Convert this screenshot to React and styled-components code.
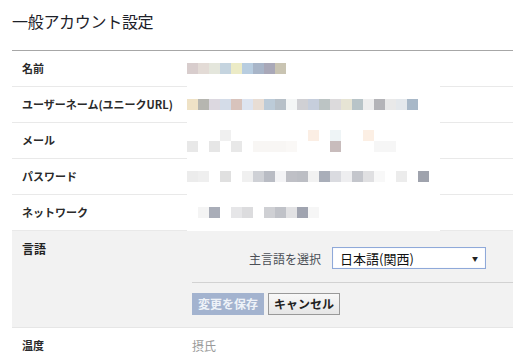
import React from 'react';
import styled, { createGlobalStyle } from 'styled-components';

const W = '#ffffff';

// Data //
const rows = [
  {
    label: '名前',
    mosaic: [['#d8cdcd', '#e3dbd6', '#e4e6dc', '#c5d4df', '#ecebc6', '#b8cde0', '#a8b5c8', '#a9a8b8', '#c9c4b2']],
  },
  {
    label: 'ユーザーネーム(ユニークURL)',
    mosaic: [[
      '#efe2c6', '#b6b6b0', '#dcd8e0', '#d4dce8', '#d8c3bc', '#dde4f0', '#e8ddd4', '#bccbd8', '#b7c0c8', '#f4f6f6', '#d0d0d4',
      '#c6cedc', '#bcc4c4', '#dcdadc', '#e6e4d4', '#b8c4c8', '#eeeeee', '#b4b4b8', '#e9e9e9', '#e4e8ec', '#a8b8c8',
    ]],
  },
  {
    label: 'メール',
    mosaic: [
      [W, W, W, '#f0f0f0', W, W, W, W, W, W, W, '#fbeee4', W, '#eef4f6', W, W, '#fcefe4'],
      ['#e8e8e8', W, '#e6e6e6', W, '#e8e8e8', W, '#f8f6f4', '#f8f6f4', '#f8f6f4', '#faf8f6', W, W, W, '#c8bcbc', W, W, W, '#f6f6f6', '#f6f6f6'],
    ],
  },
  {
    label: 'パスワード',
    mosaic: [[
      '#ececec', '#efefef', W, '#e0e0e0', W, '#f0f0f0', '#cfd1d6', '#b9bcc4', '#f4f4f6', '#bfc0c6', '#bcbec4',
      '#f2f2f2', '#a9aeb9', '#dadbe0', '#eeeef0', '#c4c6cc', '#e0e0e2', '#f8f8f8', W, '#ececec', W, '#9fa3ad',
    ]],
  },
  {
    label: 'ネットワーク',
    mosaic: [[W, '#f4f4f4', '#a9adb8', W, '#e6e6e8', '#dcdcde', W, '#cfd0d4', '#c0c2c8', '#e2e2e4', '#a0a4b0', '#f6f6f6']],
  },
];

// Styles //
const GlobalStyle = createGlobalStyle`
  html, body {
    margin: 0;
    padding: 0;
    background: #ffffff;
  }
  body {
    font-family: "Noto Sans CJK JP", "Liberation Sans", sans-serif;
    color: #333333;
  }
`;

const Page = styled.div`
  width: 513px;
  height: 359px;
  overflow: hidden;
  padding-left: 12px;
  box-sizing: border-box;
`;

const Title = styled.h2`
  margin: 0;
  height: 51px;
  box-sizing: border-box;
  padding-top: 9px;
  font-size: 16px;
  line-height: 24px;
  font-weight: 400;
  color: #1d2129;
  border-bottom: 1px solid #a7a7a7;
  letter-spacing: -0.3px;
`;

const Row = styled.div`
  display: grid;
  grid-template-columns: 175px 253px 1fr;
  height: 36px;
`;

const Label = styled.div`
  display: flex;
  align-items: center;
  padding-left: 10px;
  padding-bottom: 2px;
  font-size: 11px;
  font-weight: 700;
  color: #2a2a2a;
  border-bottom: 1px solid #e9e9e9;
  white-space: nowrap;
`;

const Value = styled.div`
  display: flex;
  flex-direction: column;
  justify-content: center;
  color: ${({ $muted }) => ($muted ? '#9a9a9a' : '#333')};
  font-size: 12px;
  padding-left: ${({ $muted }) => ($muted ? '5px' : '0')};
  padding-bottom: 1px;
`;

const Filler = styled.div`
  border-bottom: 1px solid #e9e9e9;
`;

const MosaicLine = styled.div`
  display: flex;
  height: 11px;
`;

const Cell = styled.span`
  width: 11px;
  height: 11px;
  background: ${({ $c }) => $c};
`;

const LangSection = styled.div`
  display: grid;
  grid-template-columns: 180px 1fr;
  background: #f2f2f2;
  border-bottom: 1px solid #e6e6e6;
  height: 97px;
  box-sizing: border-box;
`;

const LangLabel = styled.div`
  padding: 9px 0 0 10px;
  font-size: 12px;
  font-weight: 700;
  color: #222;
`;

const LangBody = styled.div`
  display: flex;
  flex-direction: column;
  padding-top: 16px;
`;

const SelectRow = styled.div`
  display: flex;
  align-items: center;
  gap: 11px;
  padding-left: 57px;
  padding-bottom: 13px;
  border-bottom: 1px solid #d2d2d2;
`;

const SelectLabel = styled.span`
  font-size: 12px;
  color: #4b4f56;
`;

const FakeSelect = styled.div`
  width: 154px;
  height: 22px;
  box-sizing: border-box;
  border: 1px solid #8fa9d9;
  box-shadow: inset 0 0 1px #c7d5ee;
  background: #ffffff;
  display: flex;
  align-items: center;
  justify-content: space-between;
  padding: 0 7px 0 7px;
  font-size: 13px;
  color: #111;
`;

const Arrow = styled.span`
  font-size: 6px;
  color: #222;
`;

const Buttons = styled.div`
  display: flex;
  gap: 4px;
  padding-top: 10px;
`;

const Button = styled.button`
  height: 22px;
  box-sizing: border-box;
  padding: 0 5px;
  font-family: "Noto Sans CJK JP", sans-serif;
  font-size: 12px;
  font-weight: 700;
  line-height: 20px;
  border: 1px solid ${({ $primary }) => ($primary ? '#a3b3cf' : '#999999')};
  background: ${({ $primary }) => ($primary ? '#a3b3cf' : 'linear-gradient(#f8f8f8, #e6e6e6)')};
  color: ${({ $primary }) => ($primary ? '#eef2f8' : '#222222')};
  cursor: pointer;
`;

// Componentes //
const Mosaic = ({ lines }) => (
  <>
    {lines.map((line, i) => (
      <MosaicLine key={i}>
        {line.map((c, j) => (
          <Cell key={j} $c={c} />
        ))}
      </MosaicLine>
    ))}
  </>
);

export default function App() {
  return (
    <Page>
      <GlobalStyle />
      <Title>一般アカウント設定</Title>
      {rows.map((r) => (
        <Row key={r.label}>
          <Label>{r.label}</Label>
          <Value>
            <Mosaic lines={r.mosaic} />
          </Value>
          <Filler />
        </Row>
      ))}
      <LangSection>
        <LangLabel>言語</LangLabel>
        <LangBody>
          <SelectRow>
            <SelectLabel>主言語を選択</SelectLabel>
            <FakeSelect>
              <span>日本語(関西)</span>
              <Arrow>▼</Arrow>
            </FakeSelect>
          </SelectRow>
          <Buttons>
            <Button $primary>変更を保存</Button>
            <Button>キャンセル</Button>
          </Buttons>
        </LangBody>
      </LangSection>
      <Row>
        <Label>温度</Label>
        <Value $muted>摂氏</Value>
        <div />
      </Row>
    </Page>
  );
}
